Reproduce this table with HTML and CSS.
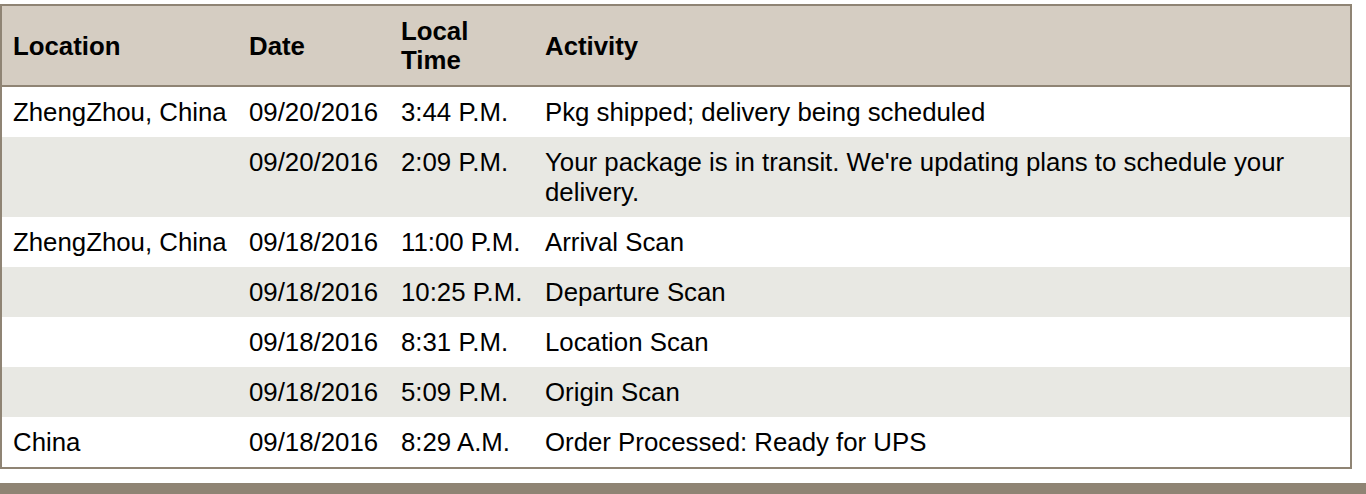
FILE: index.html
```html
<!DOCTYPE html>
<html lang="en">
<head>
  <meta charset="UTF-8" />
  <title>Shipment Progress</title>
  <link rel="stylesheet" href="styles.css">
</head>
<body>

  <!-- Shipment progress table -->
  <table class="progress">
    <colgroup>
      <col class="col-location">
      <col class="col-date">
      <col class="col-time">
      <col>
    </colgroup>
    <thead>
      <tr>
        <th>Location</th>
        <th>Date</th>
        <th>Local Time</th>
        <th>Activity</th>
      </tr>
    </thead>
    <tbody>
      <tr>
        <td class="nowrap">ZhengZhou, China</td>
        <td class="nowrap">09/20/2016</td>
        <td class="nowrap">3:44 P.M.</td>
        <td>Pkg shipped; delivery being scheduled</td>
      </tr>
      <tr class="alt">
        <td></td>
        <td class="nowrap">09/20/2016</td>
        <td class="nowrap">2:09 P.M.</td>
        <td>Your package is in transit. We're updating plans to schedule your delivery.</td>
      </tr>
      <tr>
        <td class="nowrap">ZhengZhou, China</td>
        <td class="nowrap">09/18/2016</td>
        <td class="nowrap">11:00 P.M.</td>
        <td>Arrival Scan</td>
      </tr>
      <tr class="alt">
        <td></td>
        <td class="nowrap">09/18/2016</td>
        <td class="nowrap">10:25 P.M.</td>
        <td>Departure Scan</td>
      </tr>
      <tr>
        <td></td>
        <td class="nowrap">09/18/2016</td>
        <td class="nowrap">8:31 P.M.</td>
        <td>Location Scan</td>
      </tr>
      <tr class="alt">
        <td></td>
        <td class="nowrap">09/18/2016</td>
        <td class="nowrap">5:09 P.M.</td>
        <td>Origin Scan</td>
      </tr>
      <tr>
        <td class="nowrap">China</td>
        <td class="nowrap">09/18/2016</td>
        <td class="nowrap">8:29 A.M.</td>
        <td>Order Processed: Ready for UPS</td>
      </tr>
    </tbody>
  </table>

  <div class="footer-bar"></div>

</body>
</html>
```

FILE: styles.css
```css
* {
  margin: 0;
  padding: 0;
  box-sizing: border-box;
  font-family: 'Liberation Sans', Arial, sans-serif;
}

body {
  background: #fff;
  color: #000;
}

/* Progress table */
.progress {
  width: 1352px;
  margin-top: 4px;
  border: 2px solid #8f8474;
  border-collapse: separate;
  border-spacing: 0;
  table-layout: fixed;
  font-size: 25.8px;
  line-height: 30px;
}

.col-location { width: 236px; }
.col-date { width: 152px; }
.col-time { width: 144px; }

.progress th {
  background: #d5cdc2;
  border-bottom: 2px solid #8f8474;
  text-align: left;
  font-weight: bold;
  line-height: 29px;
  padding: 11px 11px 10px;
}

.progress td {
  padding: 10px 11px;
  vertical-align: top;
}

.progress td.nowrap {
  white-space: nowrap;
}

.progress tr.alt td {
  background: #e8e8e3;
}

.footer-bar {
  height: 12px;
  margin-top: 14px;
  background: #8f8474;
}
```
